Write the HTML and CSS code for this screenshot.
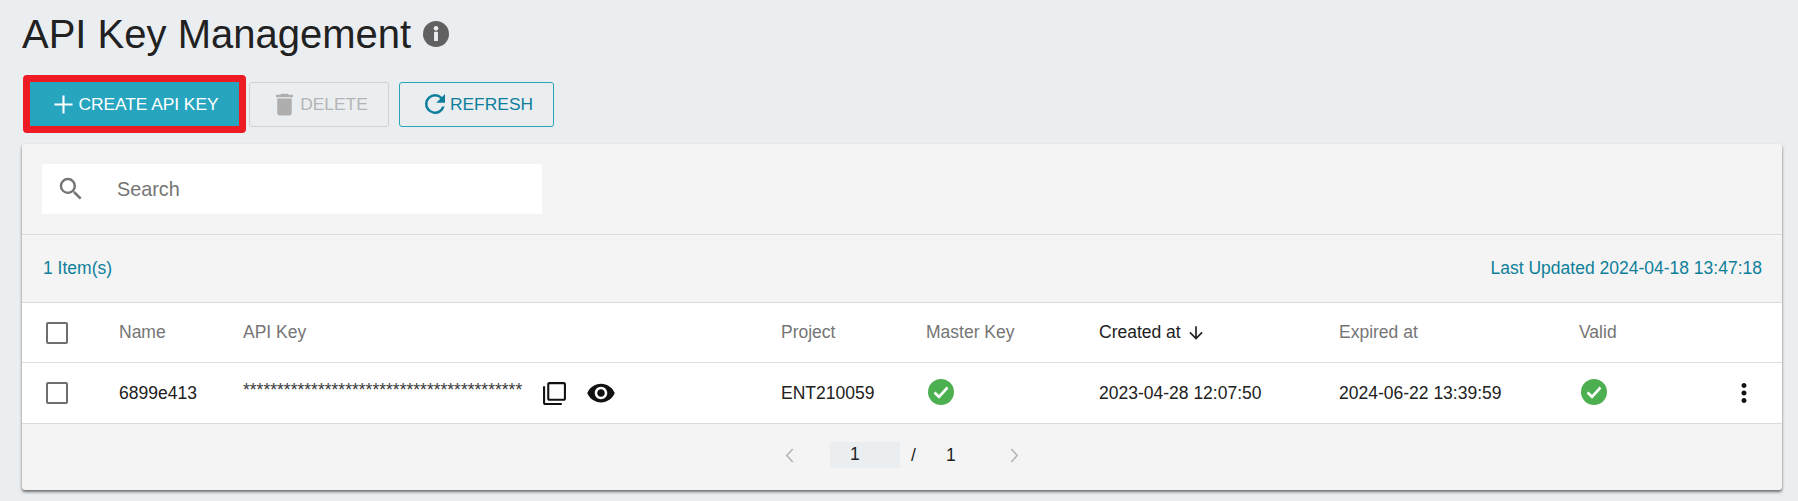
FILE: index.html
```html
<!DOCTYPE html>
<html lang="en">
<head>
<meta charset="utf-8">
<title>API Key Management</title>
<link rel="stylesheet" href="styles.css">
</head>
<body>
<header class="title-row">
  <h1>API Key Management</h1>
  <svg class="info" viewBox="0 0 24 24"><circle cx="12" cy="12" r="12" fill="#616161"/><rect x="10.200" y="10" width="3.600" height="8.500" rx=".5" fill="#ebeef1"/><circle cx="12" cy="6.800" r="2.100" fill="#ebeef1"/></svg>
</header>
<div class="toolbar">
  <div class="highlight">
    <button class="btn primary"><svg class="ic plus" viewBox="0 0 24 24"><path d="M19 12.800h-6.200V19h-1.600v-6.200H5v-1.600h6.200V5h1.600v6.200H19v1.600z" fill="#fff"/></svg>CREATE API KEY</button>
  </div>
  <button class="btn disabled"><svg class="ic trash" viewBox="0 0 24 24"><path d="M6 19c0 1.100.9 2 2 2h8c1.100 0 2-.9 2-2V7H6v12zM19 4h-3.500l-1-1h-5l-1 1H5v2h14V4z" fill="#aeaeae"/></svg>DELETE</button>
  <button class="btn outline"><svg class="ic refresh" viewBox="0 0 24 24"><path d="M17.650 6.350A7.960 7.960 0 0 0 12 4a8 8 0 1 0 7.730 10h-2.080A6 6 0 1 1 12 6c1.660 0 3.140.69 4.220 1.780L13 11h7V4l-2.350 2.350z" fill="#0e7f9b"/></svg>REFRESH</button>
</div>
<main class="card">
  <div class="search-bar">
    <div class="search">
      <svg class="search-ic" viewBox="0 0 24 24"><path d="M15.500 14h-.79l-.28-.27A6.470 6.470 0 0 0 16 9.500 6.500 6.500 0 1 0 9.500 16c1.610 0 3.090-.59 4.230-1.570l.27.28v.79l5 4.990L20.490 19l-4.990-5zm-6 0C7.010 14 5 11.990 5 9.500S7.010 5 9.500 5 14 7.010 14 9.500 11.990 14 9.500 14z" fill="#757575"/></svg>
      <span class="placeholder">Search</span>
    </div>
  </div>
  <div class="summary"><span>1 Item(s)</span><span>Last Updated 2024-04-18 13:47:18</span></div>
  <div class="row head">
    <span class="checkbox"></span>
    <span>Name</span>
    <span>API Key</span>
    <span>Project</span>
    <span>Master Key</span>
    <span class="sorted">Created at <svg class="arrow" viewBox="0 0 24 24"><path d="M20 12l-1.410-1.410L13 16.170V4h-2v12.170l-5.580-5.590L4 12l8 8 8-8z" fill="#212121"/></svg></span>
    <span>Expired at</span>
    <span>Valid</span>
    <span></span>
  </div>
  <div class="row body">
    <span class="checkbox"></span>
    <span>6899e413</span>
    <span class="key">
      <span class="stars">*****************************************</span>
      <svg class="copy" viewBox="0 0 24 24"><path d="M3 5H1v16c0 1.100.9 2 2 2h16v-2H3V5zm18-4H7c-1.100 0-2 .9-2 2v14c0 1.100.9 2 2 2h14c1.100 0 2-.9 2-2V3c0-1.100-.9-2-2-2zm0 16H7V3h14v14z" fill="#111"/></svg>
      <svg class="eye" viewBox="0 0 24 24"><path d="M12 4.500C7 4.500 2.730 7.610 1 12c1.730 4.390 6 7.500 11 7.500s9.270-3.110 11-7.500c-1.730-4.390-6-7.500-11-7.500zM12 17c-2.760 0-5-2.240-5-5s2.240-5 5-5 5 2.240 5 5-2.240 5-5 5zm0-8c-1.660 0-3 1.340-3 3s1.340 3 3 3 3-1.340 3-3-1.340-3-3-3z" fill="#111"/></svg>
    </span>
    <span>ENT210059</span>
    <span><svg class="check" viewBox="0 0 26 26"><circle cx="13" cy="13" r="13" fill="#4caf50"/><path d="M6.500 13.500l4.500 4.300L19.500 8.500" fill="none" stroke="#fff" stroke-width="2.600"/></svg></span>
    <span>2023-04-28 12:07:50</span>
    <span>2024-06-22 13:39:59</span>
    <span><svg class="check" viewBox="0 0 26 26"><circle cx="13" cy="13" r="13" fill="#4caf50"/><path d="M6.500 13.500l4.500 4.300L19.500 8.500" fill="none" stroke="#fff" stroke-width="2.600"/></svg></span>
    <span class="more"><svg class="kebab" viewBox="0 0 24 24"><path d="M12 8c1.100 0 2-.9 2-2s-.9-2-2-2-2 .9-2 2 .9 2 2 2zm0 2c-1.100 0-2 .9-2 2s.9 2 2 2 2-.9 2-2-.9-2-2-2zm0 6c-1.100 0-2 .9-2 2s.9 2 2 2 2-.9 2-2-.9-2-2-2z" fill="#111"/></svg></span>
  </div>
  <nav class="pager">
    <svg class="chev" viewBox="0 0 8 14"><path d="M7 1L1.500 7 7 13" fill="none" stroke="#b5b5b5" stroke-width="1.500"/></svg>
    <span class="page-input">1</span>
    <span class="slash">/</span>
    <span class="total">1</span>
    <svg class="chev next" viewBox="0 0 8 14"><path d="M1 1l5.500 6L1 13" fill="none" stroke="#b5b5b5" stroke-width="1.500"/></svg>
  </nav>
</main>
</body>
</html>
```
FILE: styles.css
```css
* { box-sizing: border-box; }
html, body { margin: 0; height: 100%; overflow: hidden; }
body {
  background: #ebeef1;
  color: #212121;
  font-family: "Liberation Sans", Arial, sans-serif;
  font-size: 17.5px;
  padding: 0 16px 0 22px;
}
.title-row { display: flex; align-items: center; height: 68px; gap: 12px; }
h1 { margin: 0; font-size: 40px; font-weight: 400; line-height: 68px; color: #212121; }
.info { width: 26px; height: 26px; }
.toolbar { display: flex; align-items: center; height: 72px; margin: 0 0 4px 1px; }
.highlight { border: 7px solid #ed1c24; border-radius: 4px; margin-right: 3px; }
.btn {
  display: flex; align-items: center; justify-content: center;
  height: 45px; padding: 0; font: 17.4px "Liberation Sans", Arial, sans-serif;
  border-radius: 3px; background: transparent;
}
.primary { width: 209px; height: 44px; padding-right: 3px; background: #27a5bf; color: #fff; border: 0; border-radius: 0; letter-spacing: -.06px; }
.disabled { width: 140px; margin-right: 10px; color: #b4b4b4; border: 1px solid #cfd2d5; }
.outline { width: 155px; color: #0e7f9b; border: 1px solid #27a5bf; }
.ic { flex: none; }
.plus { width: 31px; height: 31px; }
.trash { width: 29px; height: 29px; margin-right: 1px; }
.refresh { width: 30px; height: 30px; }
.card {
  width: 1760px; height: 346px;
  background: #f4f4f4;
  border-radius: 3px;
  box-shadow: 0 2px 3px rgba(0,0,0,.55);
}
.search-bar { height: 91px; padding: 20px; border-bottom: 1px solid #dcdcdc; }
.search {
  display: flex; align-items: center;
  width: 500px; height: 50px;
  background: #fff; border-radius: 2px;
}
.search-ic { width: 30px; height: 30px; margin-left: 14px; }
.placeholder { margin-left: 31px; font-size: 19.8px; color: #757575; }
.summary {
  display: flex; justify-content: space-between; align-items: center;
  height: 68px; padding: 0 20px 0 21px;
  color: #0e7f9b;
  border-bottom: 1px solid #dcdcdc;
}
.row {
  display: grid;
  grid-template-columns: 97px 124px 538px 145px 173px 240px 240px 141px 62px;
  align-items: center;
  background: #fff;
  border-bottom: 1px solid #dcdcdc;
}
.row > .checkbox { margin-left: 24px; }
.head { height: 60px; color: #757575; }
.body { height: 61px; }
.checkbox { display: block; width: 22px; height: 22px; border: 2px solid #6e6e6e; border-radius: 2px; }
.sorted { display: flex; align-items: center; gap: 5px; color: #212121; }
.arrow { width: 20px; height: 20px; }
.key { display: flex; align-items: center; }
.stars { width: 299px; margin-top: -5px; white-space: nowrap; color: #3a3a3a; }
.copy { width: 25px; height: 25px; margin-right: 19px; }
.eye { width: 30px; height: 30px; }
.check { display: block; width: 26px; height: 26px; margin: -3px 0 0 2px; }
.more { display: flex; justify-content: flex-start; }
.kebab { width: 30px; height: 30px; margin-left: 9px; }
.pager { display: flex; align-items: center; height: 66px; padding: 0 0 4px 763px; }
.chev { width: 9px; height: 15px; }
.page-input { width: 70px; height: 26px; margin-left: 36px; padding-left: 20px; line-height: 25px; background: #ebeef1; }
.slash { margin-left: 11px; }
.total { margin-left: 30px; }
.next { margin-left: 54px; }
```
